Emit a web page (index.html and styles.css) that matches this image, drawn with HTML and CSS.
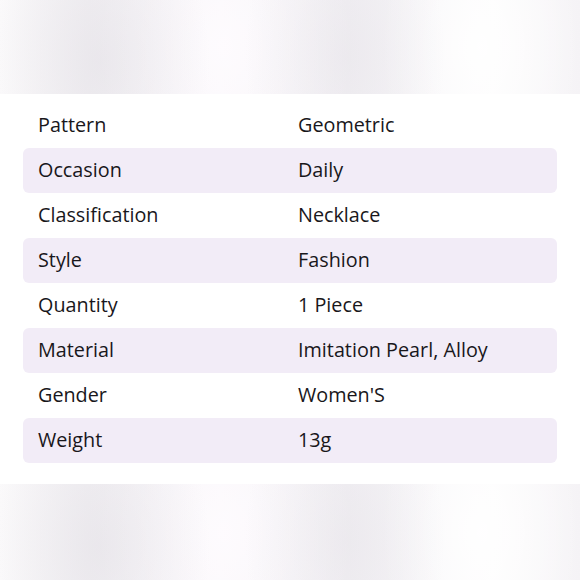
FILE: index.html
```html
<!DOCTYPE html>
<html>
<head>
<meta charset="utf-8">
<link rel="stylesheet" href="styles.css">
</head>
<body>
<div class="page">
  <div class="blur blur-top"></div>
  <div class="card">
    <div class="row"><span class="k">Pattern</span><span class="v">Geometric</span></div>
    <div class="row alt"><span class="k">Occasion</span><span class="v">Daily</span></div>
    <div class="row"><span class="k">Classification</span><span class="v">Necklace</span></div>
    <div class="row alt"><span class="k">Style</span><span class="v">Fashion</span></div>
    <div class="row"><span class="k">Quantity</span><span class="v">1 Piece</span></div>
    <div class="row alt"><span class="k">Material</span><span class="v">Imitation Pearl, Alloy</span></div>
    <div class="row"><span class="k">Gender</span><span class="v">Women'S</span></div>
    <div class="row alt"><span class="k">Weight</span><span class="v">13g</span></div>
  </div>
  <div class="blur blur-bottom"></div>
</div>
</body>
</html>
```
FILE: styles.css
```css
html, body {
  margin: 0;
  padding: 0;
}
body {
  width: 580px;
  height: 580px;
  overflow: hidden;
  font-family: "Open Sans", "Noto Sans", sans-serif;
  color: #19171b;
}
.page {
  width: 580px;
  height: 580px;
  display: flex;
  flex-direction: column;
  background: #f7f5f8;
}
.blur {
  background:
    radial-gradient(ellipse 110px 170px at 100px 65%, rgba(226,223,229,0.55), rgba(226,223,229,0) 100%),
    radial-gradient(ellipse 100px 170px at 345px 60%, rgba(230,227,232,0.5), rgba(230,227,232,0) 100%),
    radial-gradient(ellipse 130px 170px at 225px 50%, rgba(255,252,255,0.8), rgba(255,252,255,0) 100%),
    radial-gradient(ellipse 100px 170px at 480px 50%, rgba(255,255,255,0.9), rgba(255,255,255,0) 100%),
    linear-gradient(90deg, #fbfafb 0%, #f3f1f4 15%, #f9f7fa 38%, #f2f0f4 60%, #fcfbfc 85%, #f5f3f6 100%);
}
.blur-top {
  height: 94px;
  flex: none;
}
.blur-bottom {
  flex: 1;
}
.card {
  background: #ffffff;
  padding: 9px 23px 21px 23px;
  display: flex;
  flex-direction: column;
}
.row {
  height: 45px;
  display: flex;
  align-items: center;
  border-radius: 6px;
  padding-left: 15px;
  font-size: 19.8px;
  font-weight: 500;
  line-height: 1;
  padding-bottom: 1px;
  box-sizing: border-box;
}
.row.alt {
  background: #f2ecf7;
}
.k {
  width: 260px;
}
.v {
  flex: 1;
}
```
